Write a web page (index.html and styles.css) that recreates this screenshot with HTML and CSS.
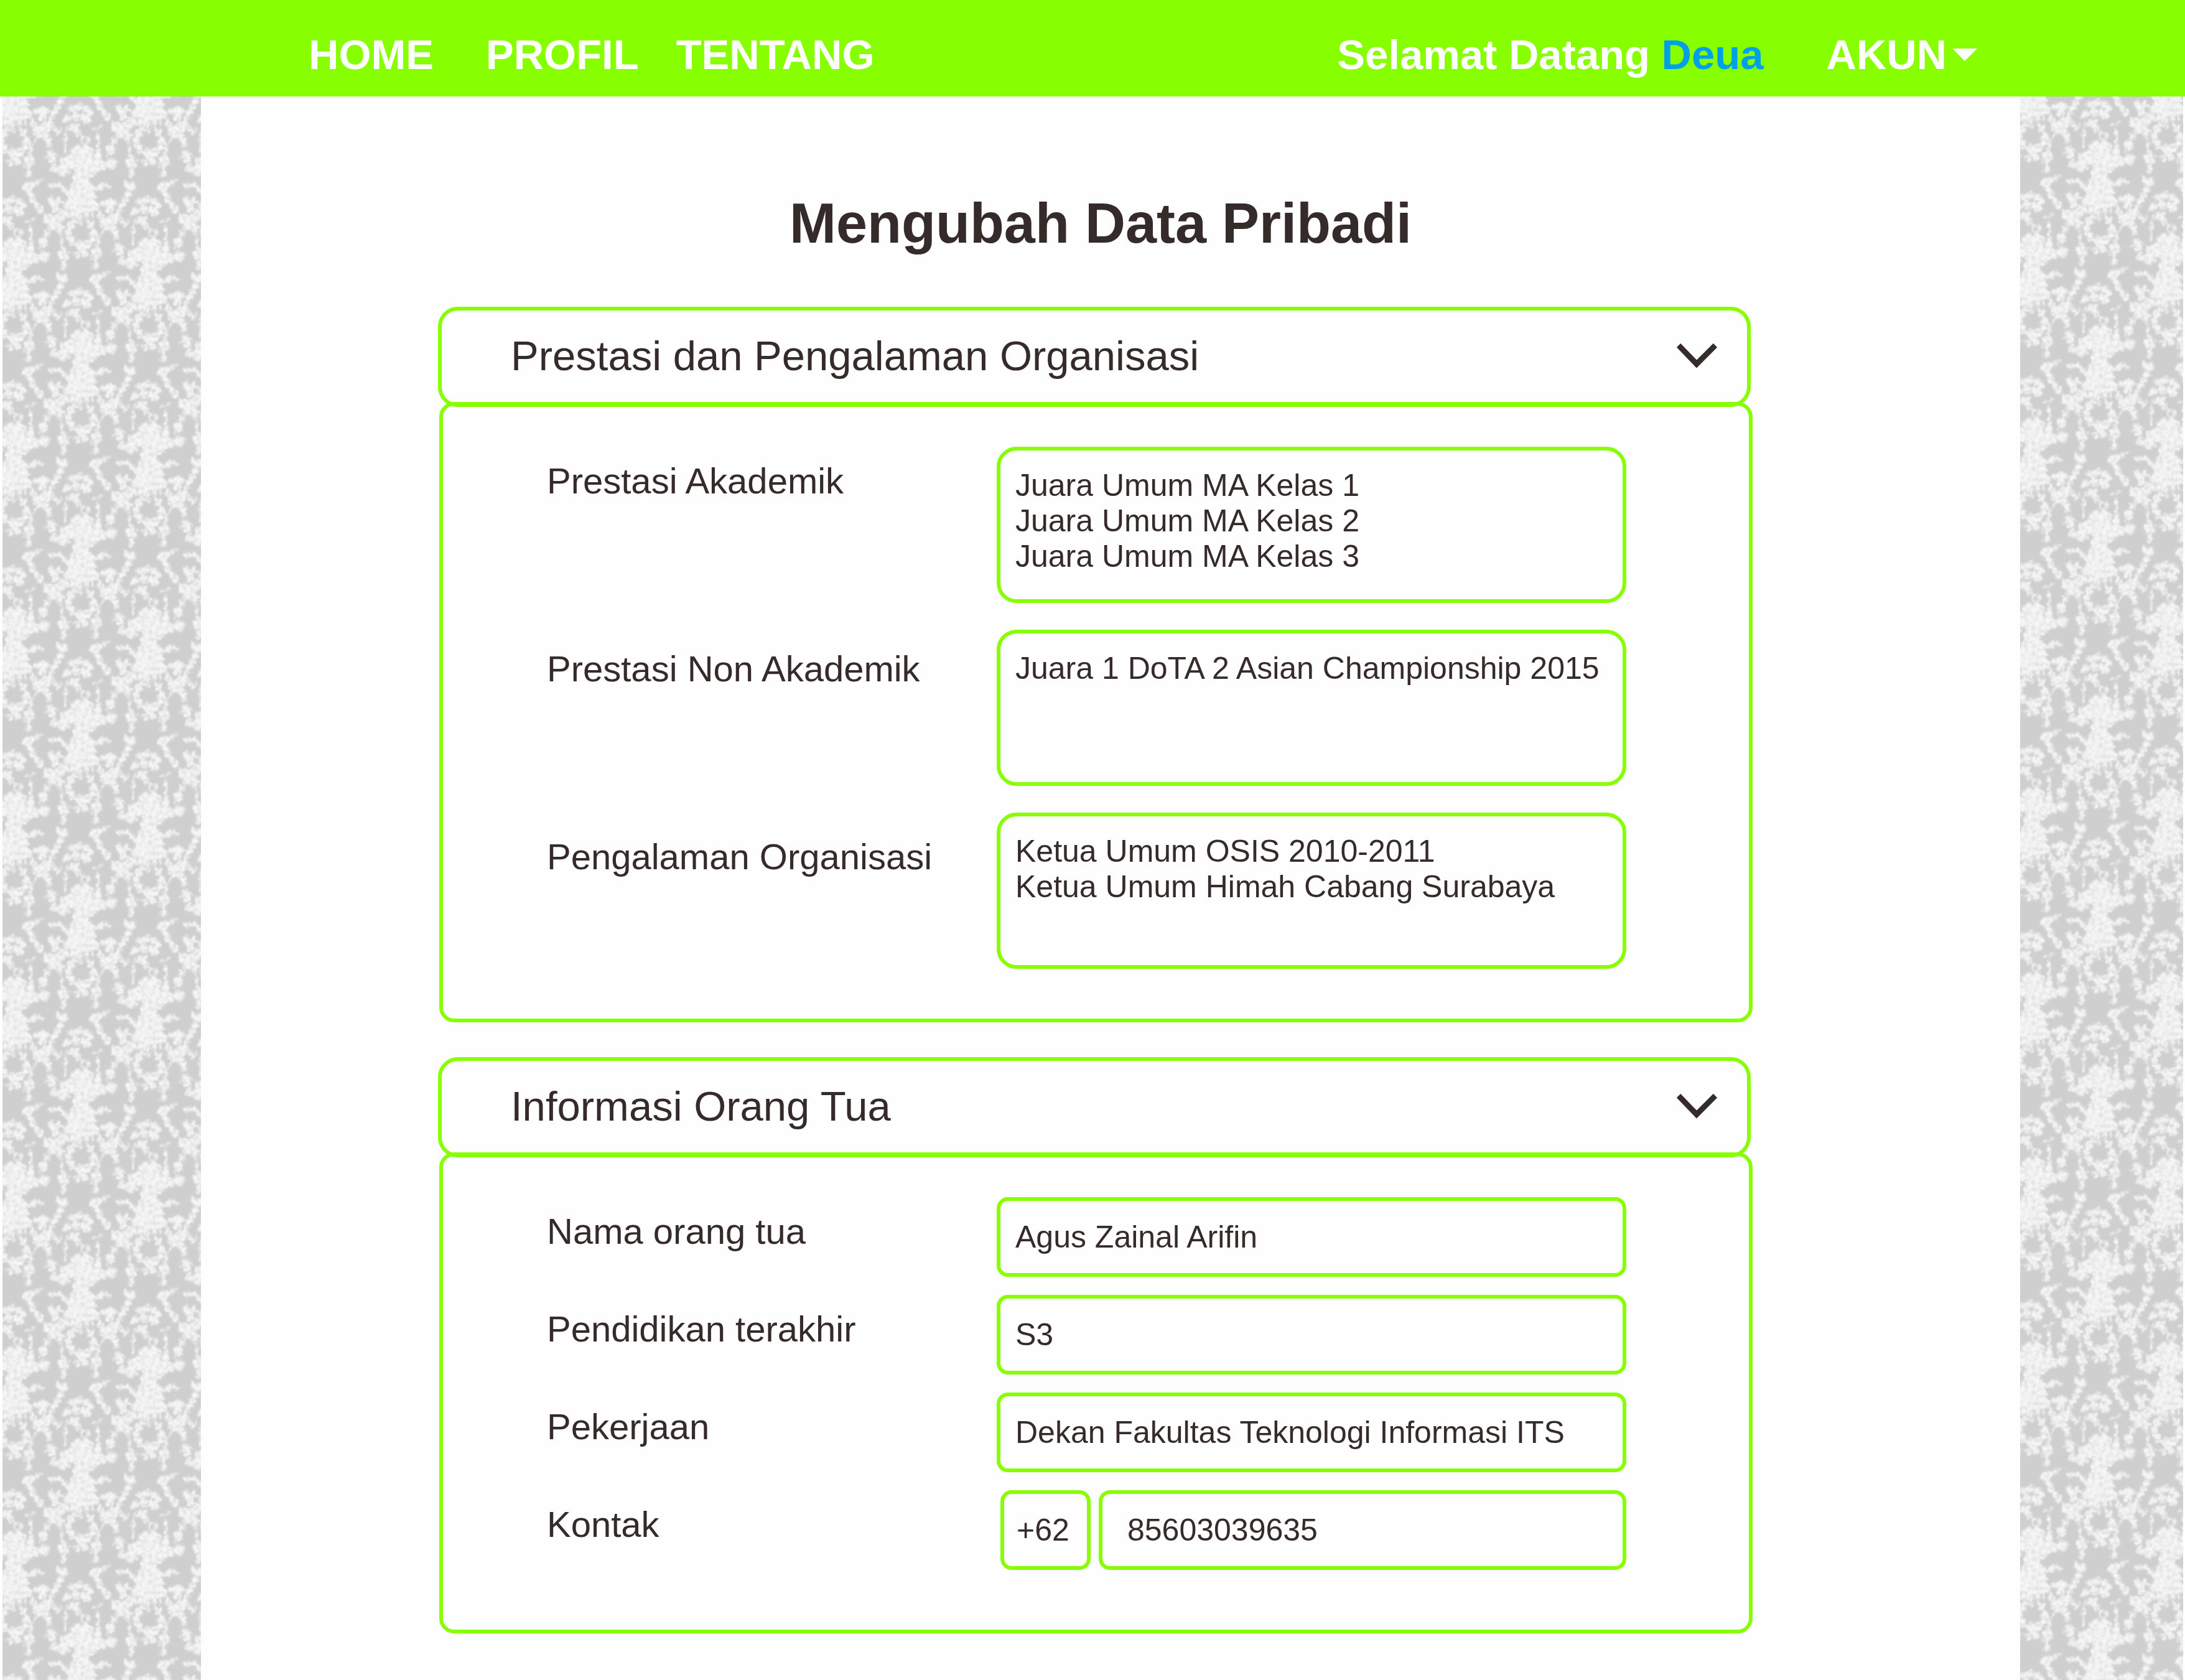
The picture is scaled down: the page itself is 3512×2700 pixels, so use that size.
FILE: index.html
```html
<!DOCTYPE html>
<html lang="id">
<head>
<meta charset="utf-8">
<meta name="viewport" content="width=device-width, initial-scale=1">
<title>Mengubah Data Pribadi</title>
<link rel="stylesheet" href="styles.css">
</head>
<body>
<header class="topbar">
  <a class="brand" href="#">HOME</a>
  <nav class="menu">
    <a href="#">PROFIL</a>
    <a href="#">TENTANG</a>
  </nav>
  <p class="greeting">Selamat Datang <a href="#">Deua</a></p>
  <button class="account" type="button">AKUN
    <svg class="caret" viewBox="0 0 40 20" aria-hidden="true"><path d="M0 0H40L20 20Z"/></svg>
  </button>
</header>

<div class="page">
  <div class="wallpaper wallpaper-left">
    <svg aria-hidden="true">
      <defs>
        <filter id="lace" filterUnits="userSpaceOnUse" x="-80" y="-50" width="170" height="370" color-interpolation-filters="sRGB">
          <feTurbulence type="fractalNoise" baseFrequency="0.16" numOctaves="2" seed="7" result="wave"/>
          <feDisplacementMap in="SourceGraphic" in2="wave" scale="13" xChannelSelector="R" yChannelSelector="G" result="ragged"/>
          <feTurbulence type="fractalNoise" baseFrequency="0.17" numOctaves="2" seed="3"/>
          <feColorMatrix type="matrix" values="0 0 0 0 1  0 0 0 0 1  0 0 0 0 1  0 3 0 0 -0.8" result="grain"/>
          <feComposite in="ragged" in2="grain" operator="in" result="petals"/>
          <feGaussianBlur in="ragged" stdDeviation="1.6" result="soft"/>
          <feComponentTransfer in="soft" result="haze"><feFuncA type="linear" slope="0.5"/></feComponentTransfer>
          <feMerge result="all"><feMergeNode in="haze"/><feMergeNode in="petals"/></feMerge>
          <feGaussianBlur in="all" stdDeviation="1.1"/>
        </filter>
        <g id="bouquet" filter="url(#lace)" fill="#f6f6f6" stroke="#f6f6f6" stroke-linecap="round" stroke-width="0">
          <!-- blossoms above the bow -->
          <circle cx="-15" cy="-24" r="5"/><circle cx="-4" cy="-28" r="6"/><circle cx="9" cy="-25" r="6"/><circle cx="16" cy="-18" r="4"/>
          <circle cx="-22" cy="-10" r="7"/><circle cx="-8" cy="-13" r="7"/><circle cx="7" cy="-9" r="8"/>
          <circle cx="-10" cy="5" r="8"/><circle cx="-4" cy="15" r="6"/>
          <circle cx="7" cy="25" r="5" fill="none" stroke-width="3"/>
          <path d="M-22 8Q-27 24-25 44M28 14V46M20 8L34 4" fill="none" stroke-width="4"/>
          <!-- bouquet -->
          <ellipse cx="2" cy="44" rx="18" ry="11"/><ellipse cx="-20" cy="60" rx="15" ry="11"/><ellipse cx="4" cy="62" rx="19" ry="14"/>
          <ellipse cx="28" cy="66" rx="14" ry="9"/><circle cx="-27" cy="74" r="9"/><circle cx="18" cy="76" r="8"/>
          <circle cx="-43" cy="70" r="7"/><circle cx="48" cy="63" r="9"/><circle cx="47" cy="41" r="8"/>
          <circle cx="54" cy="28" r="5"/><circle cx="28" cy="50" r="7"/>
          <circle cx="-50" cy="45" r="5"/><circle cx="-42" cy="48" r="4"/><circle cx="-46" cy="56" r="5"/><circle cx="-55" cy="53" r="3"/>
          <!-- basket -->
          <ellipse cx="0" cy="86" rx="13" ry="14"/><ellipse cx="1" cy="113" rx="23" ry="25"/><ellipse cx="1" cy="131" rx="30" ry="11"/>
          <path d="M-24 138L-27 148M-12 140L-14 150M0 140V160M-6 142L-8 156M8 142L10 154M18 138L20 148M28 138L30 150" stroke-width="5"/>
          <path d="M-48 98H-34L-24 108M26 104L38 97L46 101" fill="none" stroke-width="7"/>
          <!-- side blossoms -->
          <circle cx="-47" cy="123" r="6"/><circle cx="-36" cy="124" r="6"/><circle cx="-42" cy="133" r="7"/>
          <circle cx="40" cy="127" r="6"/><circle cx="50" cy="126" r="6"/><circle cx="46" cy="135" r="6"/>
          <circle cx="-52" cy="151" r="8"/><circle cx="-38" cy="154" r="9"/><circle cx="-47" cy="164" r="8"/><circle cx="-32" cy="166" r="5"/>
          <circle cx="39" cy="159" r="8"/><circle cx="52" cy="151" r="9"/><circle cx="48" cy="163" r="7"/><circle cx="60" cy="148" r="5"/>
          <path d="M-32 140L-22 146M30 146L36 150M64 156L74 160M54 172L58 180" stroke-width="7"/>
          <!-- wreath -->
          <path d="M-14 158Q-24 172-16 184Q-8 196 2 198Q14 194 20 182Q22 166 12 158" fill="none" stroke-width="10" stroke-dasharray="4 8"/>
          <circle cx="3" cy="196" r="10"/><circle cx="-6" cy="208" r="5"/><circle cx="6" cy="209" r="5"/>
          <!-- garlands -->
          <path d="M36 170Q28 182 26 196M-36 170Q-30 184-29 198" fill="none" stroke-width="4"/>
          <circle cx="25" cy="206" r="9"/><circle cx="-28" cy="207" r="9"/>
          <path d="M23 218V236M23 250L41 238M24 250Q28 270 46 290M-27 218L-29 236M-30 250L-44 236M-30 250Q-36 270-50 290" fill="none" stroke-width="9" stroke-dasharray="1 9"/>
          <circle cx="23" cy="248" r="8"/><circle cx="-29" cy="248" r="8"/>
        </g>
        <pattern id="damask-left" width="217" height="297" patternUnits="userSpaceOnUse" patternTransform="translate(72 25)">
          <rect width="217" height="297" fill="#cfcfcf"/>
          <use href="#bouquet" x="54" y="-277"/><use href="#bouquet" x="54" y="20"/><use href="#bouquet" x="54" y="317"/>
          <use href="#bouquet" x="271" y="-277"/><use href="#bouquet" x="271" y="20"/><use href="#bouquet" x="271" y="317"/>
          <use href="#bouquet" x="-54" y="-128"/><use href="#bouquet" x="-54" y="169"/>
          <use href="#bouquet" x="163" y="-128"/><use href="#bouquet" x="163" y="169"/>
        </pattern>
        <pattern id="damask-right" href="#damask-left" patternTransform="translate(73 18)"/>
      </defs>
      <rect width="100%" height="100%" fill="url(#damask-left)"/>
    </svg>
  </div>

  <main class="content">
    <h1 class="title">Mengubah Data Pribadi</h1>

    <form class="cards">
      <section class="card">
        <h2 class="card-heading">
          <button class="card-toggle" type="button" aria-expanded="true" aria-controls="prestasi">
            Prestasi dan Pengalaman Organisasi
            <svg class="chevron" viewBox="0 0 65 40" aria-hidden="true"><path d="M3 3L32 33L62 3"/></svg>
          </button>
        </h2>
        <div class="card-body" id="prestasi">
          <div class="labels labels-tall">
            <label for="akademik">Prestasi Akademik</label>
            <label for="non-akademik">Prestasi Non Akademik</label>
            <label for="organisasi">Pengalaman Organisasi</label>
          </div>
          <div class="fields fields-tall">
            <textarea class="box area" id="akademik">Juara Umum MA Kelas 1
Juara Umum MA Kelas 2
Juara Umum MA Kelas 3</textarea>
            <textarea class="box area" id="non-akademik">Juara 1 DoTA 2 Asian Championship 2015</textarea>
            <textarea class="box area" id="organisasi">Ketua Umum OSIS 2010-2011
Ketua Umum Himah Cabang Surabaya</textarea>
          </div>
        </div>
      </section>

      <section class="card">
        <h2 class="card-heading">
          <button class="card-toggle" type="button" aria-expanded="true" aria-controls="orang-tua">
            Informasi Orang Tua
            <svg class="chevron" viewBox="0 0 65 40" aria-hidden="true"><path d="M3 3L32 33L62 3"/></svg>
          </button>
        </h2>
        <div class="card-body card-body-last" id="orang-tua">
          <div class="labels">
            <label for="nama">Nama orang tua</label>
            <label for="pendidikan">Pendidikan terakhir</label>
            <label for="pekerjaan">Pekerjaan</label>
            <label for="kontak">Kontak</label>
          </div>
          <div class="fields">
            <input class="box line" id="nama" type="text" value="Agus Zainal Arifin">
            <input class="box line" id="pendidikan" type="text" value="S3">
            <input class="box line" id="pekerjaan" type="text" value="Dekan Fakultas Teknologi Informasi ITS">
            <div class="phone">
              <input class="box line prefix" type="text" value="+62" aria-label="Kode negara">
              <input class="box line number" id="kontak" type="tel" value="85603039635">
            </div>
          </div>
        </div>
      </section>
    </form>
  </main>

  <div class="wallpaper wallpaper-right">
    <svg aria-hidden="true"><rect width="100%" height="100%" fill="url(#damask-right)"/></svg>
  </div>
</div>
</body>
</html>
```

FILE: styles.css
```css
:root {
  --green: #88ff00;
  --ink: #342b2a;
  --paper: #fefefe;
}

* {
  box-sizing: border-box;
}

body {
  margin: 0;
  min-height: 100vh;
  display: flex;
  flex-direction: column;
  background: var(--paper);
  color: var(--ink);
  font-family: "Liberation Sans", Arial, Helvetica, sans-serif;
}

a {
  color: inherit;
  text-decoration: none;
}

button,
input,
textarea {
  font: inherit;
  color: inherit;
}

/* Top bar */
.topbar {
  display: flex;
  align-items: center;
  height: 155px;
  padding: 20px 334px 0 496px;
  background: var(--green);
  color: var(--paper);
  font-size: 67px;
  font-weight: 700;
  line-height: 76px;
  white-space: nowrap;
}

.brand {
  margin-right: 84px;
}

.menu {
  display: flex;
  gap: 60px;
}

.greeting {
  margin: 0 101px 0 auto;
}

.greeting a {
  color: #00a0e9;
}

.account {
  display: flex;
  align-items: center;
  gap: 9px;
  padding: 0;
  border: 0;
  background: none;
}

.caret {
  width: 40px;
  height: 20px;
  fill: currentColor;
}

/* Page */
.page {
  flex: 1;
  display: grid;
  grid-template-columns: 323px 1fr 265px;
}

.wallpaper {
  position: relative;
}

.wallpaper svg {
  position: absolute;
  inset: 0;
  width: 100%;
  height: 100%;
}

.wallpaper-left {
  border-left: 4px solid var(--paper);
}

.wallpaper-right {
  border-right: 3px solid var(--paper);
}

.content {
  padding: 152px 433px 75px 381px;
}

.title {
  margin: 0 0 82px;
  padding-left: 20px;
  font-size: 90px;
  line-height: 104px;
  text-align: center;
}

/* Cards */
.cards {
  display: flex;
  flex-direction: column;
  gap: 56px;
}

.card-heading {
  margin: 0;
  font-size: 67px;
  font-weight: 400;
  line-height: 76px;
}

.card-toggle {
  display: flex;
  align-items: center;
  justify-content: space-between;
  width: 100%;
  height: 161px;
  padding: 0 48px 4px 111px;
  border: 6px solid var(--green);
  border-radius: 32px;
  background: none;
  text-align: left;
}

.chevron {
  width: 65px;
  height: 40px;
  fill: none;
  stroke: currentColor;
  stroke-width: 9px;
}

.card-body {
  display: grid;
  grid-template-columns: 723px 1fr;
  margin: -8px -3px 0 2px;
  padding: 66px 197px 80px 167px;
  border: 6px solid var(--green);
  border-radius: 24px;
}

.card-body-last {
  padding-bottom: 96px;
}

.labels {
  display: flex;
  flex-direction: column;
  gap: 89px;
  padding-top: 21px;
  font-size: 58px;
  line-height: 68px;
}

.labels-tall {
  gap: 234px;
}

.fields {
  display: flex;
  flex-direction: column;
  gap: 29px;
  font-size: 50px;
  line-height: 57px;
}

.fields-tall {
  gap: 43px;
}

.box {
  display: block;
  width: 100%;
  min-width: 0;
  margin: 0;
  border: 6px solid var(--green);
  background: none;
  outline: 0;
}

.area {
  height: 251px;
  padding: 28px 24px;
  border-radius: 32px;
  overflow: hidden;
  resize: none;
}

.line {
  height: 128px;
  padding: 0 24px;
  border-radius: 18px;
}

.phone {
  display: flex;
  gap: 13px;
  padding-left: 6px;
}

.prefix {
  flex: 0 0 145px;
  padding: 0 20px;
}

.number {
  flex: 1;
  padding: 0 40px;
}
```
